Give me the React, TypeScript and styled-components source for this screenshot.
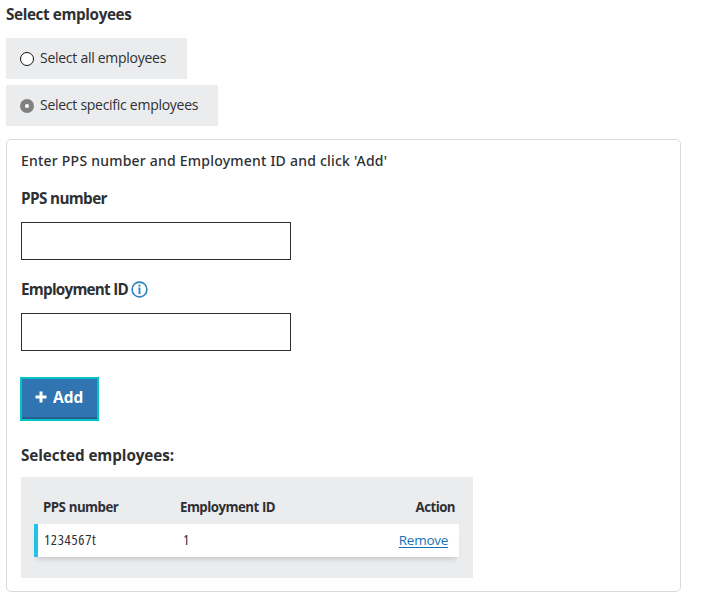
import React from 'react';
import styled, { createGlobalStyle } from 'styled-components';

const GlobalStyle = createGlobalStyle`
  *, *::before, *::after { box-sizing: border-box; }
  body {
    margin: 0;
    background: #fff;
    color: #2e3033;
    font-family: "Open Sans", "Noto Sans", sans-serif;
    font-size: 14px;
  }
`;

const Page = styled.main`
  display: flex;
  flex-direction: column;
  align-items: flex-start;
  padding: 2px 0 0 6px;
`;

const Heading = styled.h2<{ $spacing?: number }>`
  margin: 0;
  font-size: 15.25px;
  font-weight: 700;
  line-height: 24px;
  white-space: nowrap;
  letter-spacing: ${(p) => p.$spacing ?? 0}px;
`;

const Options = styled.div`
  display: flex;
  flex-direction: column;
  align-items: flex-start;
  gap: 6px;
  margin-top: 12px;
`;

const Option = styled.label<{ $width: number }>`
  display: flex;
  align-items: center;
  gap: 6px;
  width: ${(p) => p.$width}px;
  height: 41px;
  padding: 0 0 0 14px;
  background: #ebecee;
  white-space: nowrap;
`;

const OptionText = styled.span`
  margin-bottom: 2px;
  line-height: 20px;
  letter-spacing: -0.27px;
`;

const Radio = styled.input`
  appearance: none;
  flex: none;
  width: 14px;
  height: 14px;
  margin: 1px 0 0;
  border: 1px solid #111;
  border-radius: 50%;
  background: #fff;
  &:checked {
    border: 5px solid #808080;
  }
`;

const Card = styled.section`
  display: flex;
  flex-direction: column;
  align-items: flex-start;
  width: 675px;
  height: 453px;
  margin-top: 13px;
  padding: 10px 14px;
  border: 1px solid #d9dadb;
  border-radius: 5px;
`;

const Instruction = styled.p`
  margin: 0;
  font-family: "Noto Sans", sans-serif;
  font-size: 14px;
  font-weight: 500;
  line-height: 22px;
  letter-spacing: 0.22px;
  white-space: nowrap;
`;

const Field = styled.div<{ $gap: number }>`
  display: flex;
  flex-direction: column;
  margin-top: ${(p) => p.$gap}px;
`;

const LabelRow = styled.div`
  display: flex;
  align-items: center;
  gap: 3px;
  height: 24px;
`;

const FieldLabel = styled(Heading)`
  margin-bottom: 1px;
`;

const TextInput = styled.input`
  width: 270px;
  height: 38px;
  margin-top: 12px;
  padding: 0 10px;
  border: 1px solid #2e3033;
  border-radius: 0;
  background: #fff;
  font: inherit;
  outline: none;
`;

const InfoIcon = styled.svg`
  width: 17px;
  height: 17px;
  flex: none;
`;

const AddButton = styled.button`
  display: flex;
  align-items: center;
  gap: 6px;
  width: 79px;
  height: 44px;
  margin: 26px 0 0 -1px;
  padding: 0 0 4px 13px;
  border: 2px solid #00c4c8;
  background: #3174b2;
  box-shadow: inset 0 -2px 0 #285f92;
  color: #fff;
  font-family: inherit;
  font-size: 15.5px;
  font-weight: 700;
  line-height: 20px;
`;

const PlusIcon = styled.svg`
  width: 12px;
  height: 12px;
  flex: none;
`;

const SelectedHeading = styled(Heading)`
  margin-top: 22px;
`;

const TablePanel = styled.div`
  width: 452px;
  height: 101px;
  margin-top: 10px;
  padding: 13px 14px 0 13px;
  background: #ebecee;
`;

const HeaderRow = styled.div`
  display: grid;
  grid-template-columns: 137px 1fr auto;
  align-items: center;
  height: 34px;
  padding: 0 4px 0 9px;
  font-size: 13.25px;
  font-weight: 700;
  letter-spacing: -0.53px;
  word-spacing: 0.5px;
  white-space: nowrap;
`;

const DataRow = styled.div`
  display: grid;
  grid-template-columns: 139px 1fr auto;
  align-items: center;
  height: 33px;
  padding: 0 11px 2px 6px;
  border-left: 4px solid #22c1e6;
  background: #fff;
  box-shadow: 0 5px 5px -3px rgba(0, 0, 0, 0.16);
  white-space: nowrap;
`;

const Cell = styled.span`
  font-size: 14.5px;
  font-stretch: 75%;
  letter-spacing: 0.7px;
`;

const RemoveLink = styled.a`
  color: #1473b8;
  font-size: 13.5px;
  letter-spacing: -0.28px;
  text-decoration: underline;
  text-decoration-thickness: 1px;
  text-underline-offset: 2px;
`;

export default function App() {
  return (
    <>
      <GlobalStyle />
      <Page>
        <Heading $spacing={-0.38}>Select employees</Heading>
        <Options>
          <Option $width={181}>
            <Radio type="radio" name="scope" />
            <OptionText>Select all employees</OptionText>
          </Option>
          <Option $width={212}>
            <Radio type="radio" name="scope" defaultChecked />
            <OptionText>Select specific employees</OptionText>
          </Option>
        </Options>

        <Card>
          <Instruction>Enter PPS number and Employment ID and click 'Add'</Instruction>
          <Field $gap={14}>
            <LabelRow>
              <FieldLabel as="label" htmlFor="pps" $spacing={-0.63}>PPS number</FieldLabel>
            </LabelRow>
            <TextInput id="pps" />
          </Field>
          <Field $gap={17}>
            <LabelRow>
              <FieldLabel as="label" htmlFor="employment" $spacing={-0.76}>Employment ID</FieldLabel>
              <InfoIcon viewBox="0 0 17 17" fill="none">
                <circle cx="8.5" cy="8.5" r="7.4" stroke="#2b83c2" strokeWidth="1.6" />
                <path d="M8.5 6.8v5.8" stroke="#2b83c2" strokeWidth="1.8" />
                <path d="M7.2 7.1h1.8M7.2 12.4h2.6" stroke="#2b83c2" strokeWidth="0.7" />
                <circle cx="8.5" cy="4.7" r="1.1" fill="#2b83c2" />
              </InfoIcon>
            </LabelRow>
            <TextInput id="employment" />
          </Field>
          <AddButton type="button">
            <PlusIcon viewBox="0 0 12 12">
              <path d="M6 0.5v11M0.5 6h11" stroke="#fff" strokeWidth="3" />
            </PlusIcon>
            Add
          </AddButton>

          <SelectedHeading as="h3" $spacing={-0.08}>Selected employees:</SelectedHeading>
          <TablePanel>
            <HeaderRow>
              <span>PPS number</span>
              <span>Employment ID</span>
              <span>Action</span>
            </HeaderRow>
            <DataRow>
              <Cell>1234567t</Cell>
              <Cell>1</Cell>
              <RemoveLink href="#">Remove</RemoveLink>
            </DataRow>
          </TablePanel>
        </Card>
      </Page>
    </>
  );
}
